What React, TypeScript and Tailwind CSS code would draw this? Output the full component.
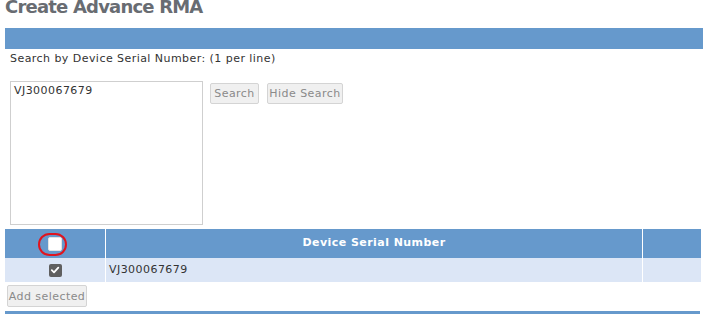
import React from "react";

const font = { fontFamily: '"DejaVu Sans", Verdana, sans-serif' };

function Btn({ children, className = "" }: { children: React.ReactNode; className?: string }) {
  return (
    <button
      className={`h-[21px] border border-[#d4d4d4] rounded-[2px] bg-[#f0f0f0] text-[11px] leading-none text-[#8a8a8a] ${className}`}
    >
      {children}
    </button>
  );
}

export default function App() {
  return (
    <div className="w-[703px] h-[314px] overflow-hidden bg-white tracking-[0.45px]" style={font}>
      {/* page title, cut off at top */}
      <h1 className="-mt-[3px] pl-[5px] h-[20px] text-[18px] leading-[20px] font-bold tracking-[-0.8px] text-[#686c72]">
        Create Advance RMA
      </h1>

      <div className="mt-[11px] ml-[5px] h-[21px] bg-[#6699cc]" />

      <div className="pl-[10px]">
        <p className="mt-[3px] h-[14px] text-[11px] leading-[14px] text-[#333]">
          Search by Device Serial Number: (1 per line)
        </p>

        <div className="mt-[15px] flex items-start gap-[7px]">
          <textarea
            defaultValue="VJ300067679"
            className="w-[193px] h-[144px] border border-[#cfcfcf] pt-[2px] pl-[3px] text-[11px] leading-[14px] text-[#333] resize-none outline-none"
          />
          <div className="mt-[2px] flex gap-[8px]">
            <Btn className="w-[49px]">Search</Btn>
            <Btn className="w-[76px]">Hide Search</Btn>
          </div>
        </div>
      </div>

      {/* results table */}
      <div className="mt-[4px] ml-[5px] w-[696px] text-[11px]">
        <div className="flex h-[29px] bg-[#6699cc]">
          <div className="relative w-[101px] flex items-center justify-center border-r border-white">
            <span className="w-[14px] h-[14px] rounded-[2px] bg-white border border-[#e4e4e4]" />
            <span className="absolute left-[33px] top-[4px] w-[29px] h-[23px] rounded-full border-[2px] border-[#e0141e]" />
          </div>
          <div className="w-[537px] flex items-center justify-center font-bold text-white border-r border-white">
            Device Serial Number
          </div>
          <div className="flex-1" />
        </div>
        <div className="flex h-[24px] bg-[#dce6f6]">
          <div className="w-[101px] flex items-center justify-center border-r border-white">
            <span className="w-[13px] h-[13px] rounded-[2px] bg-[#5f5f5f] flex items-center justify-center">
              <svg width="10" height="10" viewBox="0 0 10 10">
                <path d="M1.8 5.2 L4 7.3 L8.3 2.6" fill="none" stroke="white" strokeWidth="1.8" strokeLinecap="round" strokeLinejoin="round" />
              </svg>
            </span>
          </div>
          <div className="w-[537px] flex items-center pl-[3px] text-[#333] border-r border-white">
            VJ300067679
          </div>
          <div className="flex-1" />
        </div>
      </div>

      <div className="mt-[3px] ml-[7px] flex">
        <Btn className="w-[80px] h-[22px]">Add selected</Btn>
      </div>

      <div className="mt-[4px] ml-[5px] w-[695px] h-[4px] bg-[#6699cc]" />
    </div>
  );
}
